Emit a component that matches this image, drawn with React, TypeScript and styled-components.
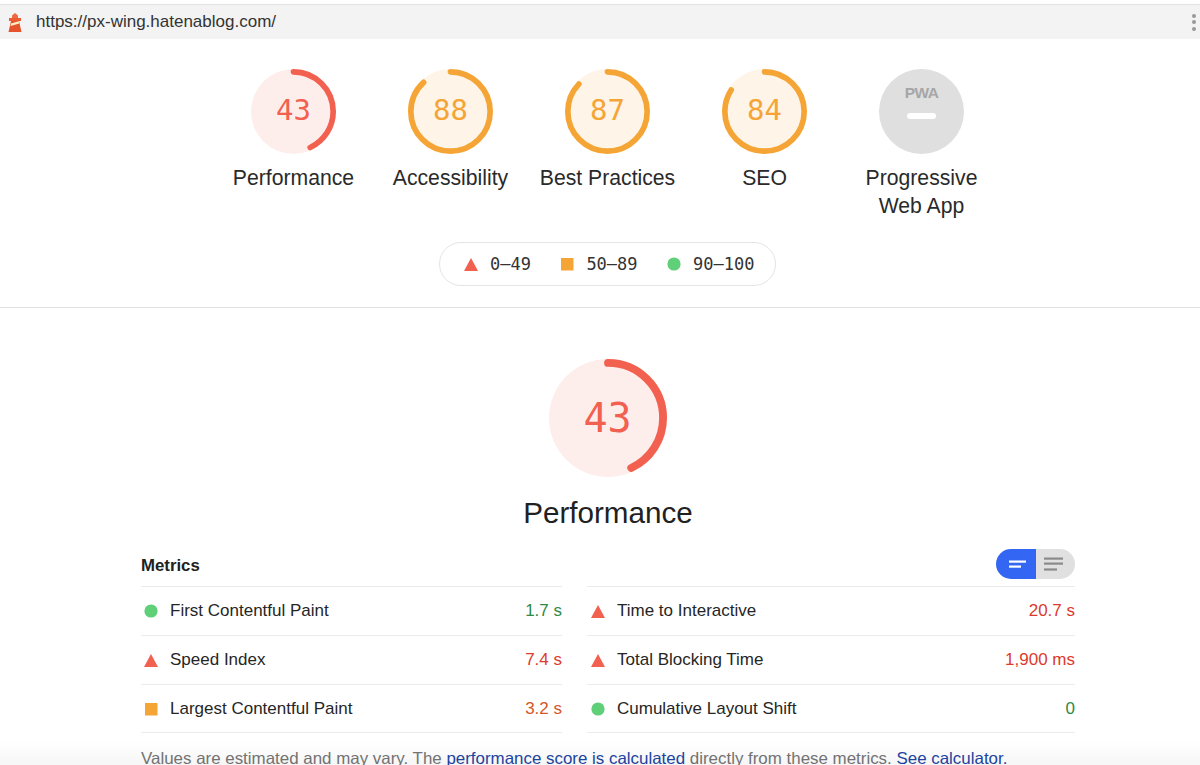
import React from "react";
import styled, { createGlobalStyle } from "styled-components";

const Global = createGlobalStyle`
  html, body { margin: 0; padding: 0; background: #fff; }
  body { font-family: "Liberation Sans", Arial, sans-serif; color: #212121; }
`;

const C = {
  red: "#f2604f",
  orange: "#f5a536",
  green: "#5fcf78",
  gray: "#dedede",
};

const Page = styled.div`
  position: relative;
  width: 1200px;
  height: 765px;
  overflow: hidden;
  background: #fff;
`;
const TopBar = styled.header`
  display: flex;
  align-items: center;
  height: 34px;
  margin-top: 4px;
  padding: 0 4px 0 8px;
  border-top: 1px solid #e2e2e2;
  background: #f3f3f3;
`;
const Url = styled.span`
  margin-left: 14px;
  font-size: 17px;
  color: #333;
  flex: 1;
`;
const Dots = styled.div`
  display: flex;
  flex-direction: column;
  gap: 2.5px;
  span {
    width: 4px;
    height: 4px;
    border-radius: 50%;
    background: #999;
  }
`;
const Summary = styled.section`
  display: flex;
  flex-direction: column;
  align-items: center;
  height: 269px;
  padding: 30px 0 0 15px;
  box-sizing: border-box;
  border-bottom: 1px solid #e0e0e0;
`;
const GaugeRow = styled.div`
  display: flex;
`;
const GaugeItem = styled.div`
  display: flex;
  flex-direction: column;
  align-items: center;
  width: 157px;
  height: 173px;
`;
const Ring = styled.div<{ $size: number; $nudge?: number }>`
  position: relative;
  flex: none;
  width: ${(p) => p.$size}px;
  height: ${(p) => p.$size}px;
  margin-right: ${(p) => p.$nudge ?? 0}px;
`;
const RingSvg = styled.svg`
  display: block;
  width: 100%;
  height: 100%;
  transform: rotate(-90deg);
`;
const Score = styled.span<{ $color: string; $font: number; $lift: number }>`
  position: absolute;
  inset: 0;
  display: flex;
  align-items: center;
  justify-content: center;
  padding-bottom: ${(p) => p.$lift}px;
  font-family: "DejaVu Sans Mono", monospace;
  font-size: ${(p) => p.$font}px;
  color: ${(p) => p.$color};
`;
const GaugeLabel = styled.div`
  margin-top: 10px;
  width: 157px;
  text-align: center;
  font-size: 21.2px;
  line-height: 28px;
  white-space: pre-line;
  color: #2a2a2a;
`;
const Legend = styled.div`
  display: flex;
  align-items: center;
  gap: 29.5px;
  height: 44px;
  padding: 0 20.6px 1px 24px;
  box-sizing: border-box;
  border: 1px solid #e4e4e4;
  border-radius: 22px;
`;
const LegendItem = styled.div`
  display: flex;
  align-items: center;
  gap: 12px;
  font-family: "DejaVu Sans Mono", monospace;
  font-size: 17px;
  color: #333;
`;
const Detail = styled.section`
  display: flex;
  flex-direction: column;
  align-items: center;
  padding: 51px 125px 0 141px;
`;
const BigTitle = styled.h2`
  margin: 15px 0 0;
  font-size: 29.6px;
  line-height: 42px;
  font-weight: 400;
  color: #212121;
`;
const MetricsHead = styled.div`
  display: flex;
  align-items: center;
  justify-content: space-between;
  align-self: stretch;
  height: 30px;
  margin-top: 15px;
  margin-bottom: 7px;
`;
const MetricsTitle = styled.h3`
  margin: 0;
  padding-top: 4px;
  font-size: 16.8px;
  font-weight: 700;
  color: #212121;
`;
const Toggle = styled.div`
  display: flex;
  height: 30px;
  border-radius: 15px;
  overflow: hidden;
`;
const ToggleSeg = styled.div<{ $active?: boolean }>`
  display: flex;
  align-items: center;
  justify-content: center;
  width: 39.5px;
  background: ${(p) => (p.$active ? "#3366f2" : "#e0e0e0")};
`;
const MetricsGrid = styled.div`
  display: grid;
  grid-template-columns: 421px 488px;
  column-gap: 25px;
  align-self: stretch;
`;
const MetricRow = styled.div`
  display: flex;
  align-items: center;
  height: 49px;
  box-sizing: border-box;
  border-top: 1px solid #ebebeb;
  &:nth-child(even) svg {
    margin-left: 4px;
  }
`;
const LastRow = styled(MetricRow)`
  border-bottom: 1px solid #ebebeb;
`;
const MetricIcon = styled.svg`
  flex: none;
  width: 14px;
  height: 14px;
  margin: 0 12px 0 3px;
`;
const MetricName = styled.span`
  flex: 1;
  font-size: 17px;
  color: #262626;
`;
const MetricValue = styled.span<{ $color: string }>`
  font-size: 17px;
  color: ${(p) => p.$color};
`;
const Note = styled.p`
  align-self: stretch;
  margin: 15px -100px 0 0;
  font-size: 16.92px;
  line-height: 22px;
  color: #757575;
  white-space: nowrap;
`;
const NoteLink = styled.a`
  color: #1c45a3;
`;
const BottomFade = styled.div`
  position: absolute;
  left: 0;
  right: 0;
  bottom: 0;
  height: 24px;
  background: linear-gradient(rgba(0, 0, 0, 0), rgba(0, 0, 0, 0.035));
  pointer-events: none;
`;
const LegendIcon = styled.svg`
  display: block;
  width: 14px;
  height: 14px;
`;

type Kind = "fail" | "avg" | "pass";

const Shape = ({ kind }: { kind: Kind }) =>
  kind === "fail" ? (
    <polygon points="7,1 14,14 0,14" fill={C.red} />
  ) : kind === "avg" ? (
    <rect x="1" y="1" width="12.5" height="12.5" fill={C.orange} />
  ) : (
    <circle cx="7" cy="7" r="6.6" fill={C.green} />
  );

const colorOf = (score: number) => (score < 50 ? C.red : score < 90 ? C.orange : C.green);
const tintOf = (score: number) => (score < 50 ? "#fdeeec" : "#fef4e8");

const Gauge = ({
  score,
  size,
  font,
  nudge,
  lift,
}: {
  score: number;
  size: number;
  font: number;
  nudge?: number;
  lift: number;
}) => {
  const circumference = 2 * Math.PI * 56;
  return (
    <Ring $size={size} $nudge={nudge}>
      <RingSvg viewBox="0 0 120 120">
        <circle cx="60" cy="60" r="60" fill={tintOf(score)} />
        <circle
          cx="60"
          cy="60"
          r="56"
          fill="none"
          stroke={colorOf(score)}
          strokeWidth="8"
          strokeLinecap="round"
          strokeDasharray={`${(score / 100) * circumference} ${circumference}`}
        />
      </RingSvg>
      <Score $color={colorOf(score)} $font={font} $lift={lift}>
        {score}
      </Score>
    </Ring>
  );
};

const PwaGauge = () => (
  <Ring $size={85}>
    <svg viewBox="0 0 85 85" width="85" height="85" style={{ display: "block" }}>
      <circle cx="42.5" cy="42.5" r="42.5" fill="#dfdfdf" />
      <text
        x="42.5"
        y="29"
        textAnchor="middle"
        fontFamily="Liberation Sans, Arial, sans-serif"
        fontWeight="700"
        fontSize="15.5"
        letterSpacing="-0.6"
        fill="#a6a6a6"
      >
        PWA
      </text>
      <rect x="28" y="44" width="29" height="6" rx="3" fill="#fff" />
    </svg>
  </Ring>
);

const Lighthouse = () => (
  <svg width="14" height="19" viewBox="0 0 14 19" style={{ display: "block" }}>
    <path d="M7 0 L10 2.6 V5 H4 V2.6 Z" fill="#ee6a45" />
    <path d="M1 5 H13 V8 H1 Z" fill="#ea5a33" />
    <path d="M3 8 H11 L13.5 19 H0.5 Z" fill="#e5532d" />
    <path d="M3 10.4 L10.8 8.2 L11.3 10.6 L2.6 13 Z" fill="#fdeec4" />
  </svg>
);

const metrics: { kind: Kind; name: string; value: string; color: string }[] = [
  { kind: "pass", name: "First Contentful Paint", value: "1.7 s", color: "#2f8a48" },
  { kind: "fail", name: "Time to Interactive", value: "20.7 s", color: "#dc3a2c" },
  { kind: "fail", name: "Speed Index", value: "7.4 s", color: "#dc3a2c" },
  { kind: "fail", name: "Total Blocking Time", value: "1,900 ms", color: "#dc3a2c" },
  { kind: "avg", name: "Largest Contentful Paint", value: "3.2 s", color: "#d2562a" },
  { kind: "pass", name: "Cumulative Layout Shift", value: "0", color: "#2f8a48" },
];

const gauges = [
  { score: 43, label: "Performance" },
  { score: 88, label: "Accessibility" },
  { score: 87, label: "Best Practices" },
  { score: 84, label: "SEO" },
];

export default function App() {
  return (
    <Page>
      <Global />
      <TopBar>
        <Lighthouse />
        <Url>https://px-wing.hatenablog.com/</Url>
        <Dots>
          <span />
          <span />
          <span />
        </Dots>
      </TopBar>
      <Summary>
        <GaugeRow>
          {gauges.map((g) => (
            <GaugeItem key={g.label}>
              <Gauge score={g.score} size={85} font={29} lift={3} />
              <GaugeLabel>{g.label}</GaugeLabel>
            </GaugeItem>
          ))}
          <GaugeItem>
            <PwaGauge />
            <GaugeLabel>{"Progressive\nWeb App"}</GaugeLabel>
          </GaugeItem>
        </GaugeRow>
        <Legend>
          <LegendItem>
            <LegendIcon viewBox="0 0 14 14">
              <Shape kind="fail" />
            </LegendIcon>
            0–49
          </LegendItem>
          <LegendItem>
            <LegendIcon viewBox="0 0 14 14">
              <Shape kind="avg" />
            </LegendIcon>
            50–89
          </LegendItem>
          <LegendItem>
            <LegendIcon viewBox="0 0 14 14">
              <Shape kind="pass" />
            </LegendIcon>
            90–100
          </LegendItem>
        </Legend>
      </Summary>
      <Detail>
        <Gauge score={43} size={118} font={40} nudge={1} lift={0} />
        <BigTitle>Performance</BigTitle>
        <MetricsHead>
          <MetricsTitle>Metrics</MetricsTitle>
          <Toggle>
            <ToggleSeg $active>
              <svg width="20" height="9" viewBox="0 0 20 9">
                <rect x="3" y="0.5" width="17" height="2.2" fill="#fff" />
                <rect x="3" y="5.5" width="12" height="2.2" fill="#fff" />
              </svg>
            </ToggleSeg>
            <ToggleSeg>
              <svg width="22" height="14" viewBox="0 0 22 14">
                <rect x="0" y="0.5" width="19" height="2.2" fill="#8a8a8a" />
                <rect x="0" y="5.5" width="19" height="2.2" fill="#8a8a8a" />
                <rect x="0" y="11.4" width="13" height="2.2" fill="#8a8a8a" />
              </svg>
            </ToggleSeg>
          </Toggle>
        </MetricsHead>
        <MetricsGrid>
          {metrics.map((m, i) => {
            const Row = i >= 4 ? LastRow : MetricRow;
            return (
              <Row key={m.name}>
                <MetricIcon viewBox="0 0 14 14">
                  <Shape kind={m.kind} />
                </MetricIcon>
                <MetricName>{m.name}</MetricName>
                <MetricValue $color={m.color}>{m.value}</MetricValue>
              </Row>
            );
          })}
        </MetricsGrid>
        <Note>
          Values are estimated and may vary. The <NoteLink>performance score is calculated</NoteLink> directly from
          these metrics. <NoteLink>See calculator.</NoteLink>
        </Note>
      </Detail>
      <BottomFade />
    </Page>
  );
}
